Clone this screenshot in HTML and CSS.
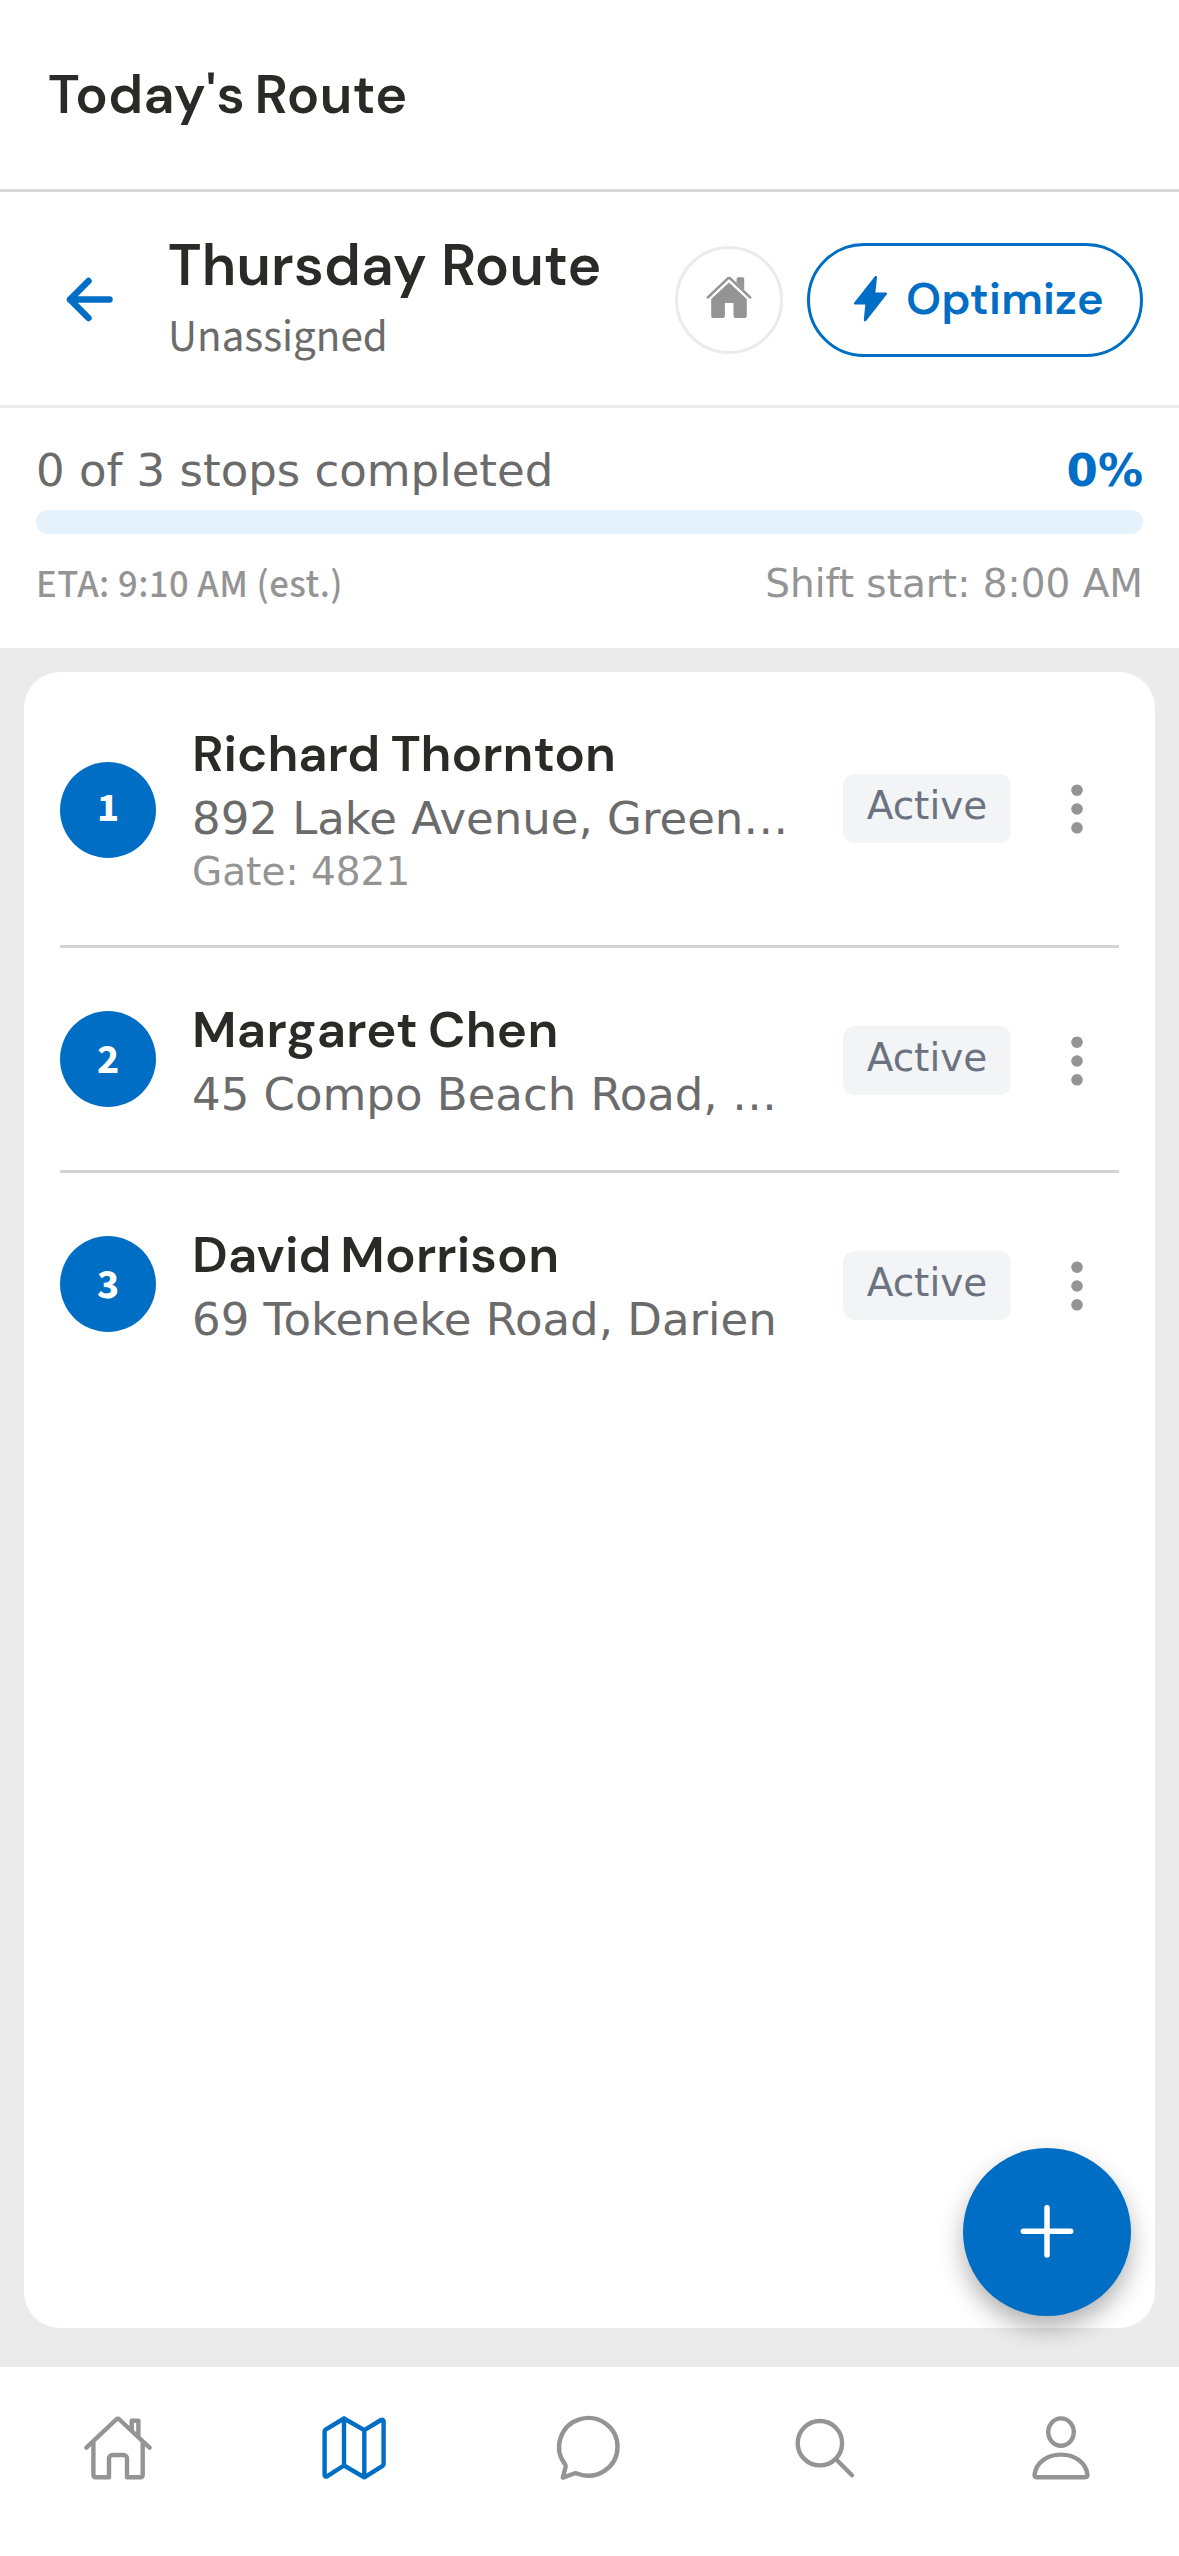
FILE: index.html
```html
<!DOCTYPE html>
<html lang="en">
<head>
<meta charset="utf-8">
<title>Today's Route</title>
<link rel="stylesheet" href="styles.css">
</head>
<body>
<div class="app">
  <header class="topbar"><h1 class="topbar-title">Today's Route</h1></header>

  <section class="route-header">
    <svg class="back" viewBox="0 0 72 72"><path d="M55.5 35.5H16M34.5 17 16 35.5l18.5 18.5"/></svg>
    <div class="route-heading">
      <h2 class="route-title">Thursday Route</h2>
      <p class="route-assignee">Unassigned</p>
    </div>
    <button class="home-button" aria-label="Start location">
      <svg class="home-solid" viewBox="0 0 48 48">
        <path d="M24 6.5 41.8 23v17a2 2 0 0 1-2 2H30.5a2 2 0 0 1-2-2V27h-8.6v13a2 2 0 0 1-2 2H8.2a2 2 0 0 1-2-2V23z"/>
        <path d="M31.6 6.8V2.8a1.5 1.5 0 0 1 1.5-1.5h4.6a1.5 1.5 0 0 1 1.5 1.5v11.4z"/>
        <path class="roof" d="M2.9 21.4 22.6 2.6q1.4-1.2 2.8 0l19.7 18.8"/>
      </svg>
    </button>
    <button class="optimize">
      <svg class="bolt" viewBox="0 0 33 46"><path d="M20.8.6c.9-1 2.3-.4 2.2.9L21.4 16.5h10.3c1.3 0 1.8 1.2 1 2.1L12.2 44.7c-.9 1.1-2.5.5-2.4-.9l1.5-15.3H1.2c-1.2 0-1.6-1.2-.9-2.1z"/></svg>
      <span>Optimize</span>
    </button>
  </section>

  <section class="progress">
    <div class="progress-row"><span>0 of 3 stops completed</span><strong class="percent">0%</strong></div>
    <div class="bar"></div>
    <div class="progress-meta"><span class="eta">ETA: 9:10 AM (est.)</span><span>Shift start: 8:00 AM</span></div>
  </section>

  <main class="main">
    <div class="card">
      <div class="stop stop-tall">
        <span class="number">1</span>
        <div class="info">
          <h3 class="name name-1">Richard Thornton</h3>
          <p class="address">892 Lake Avenue, Green…</p>
          <p class="note">Gate: 4821</p>
        </div>
        <span class="badge">Active</span>
        <svg class="kebab" viewBox="0 0 12 54"><circle cx="6" cy="8.2" r="5.8"/><circle cx="6" cy="27" r="5.8"/><circle cx="6" cy="45.8" r="5.8"/></svg>
      </div>
      <div class="stop">
        <span class="number">2</span>
        <div class="info">
          <h3 class="name name-2">Margaret Chen</h3>
          <p class="address">45 Compo Beach Road, …</p>
        </div>
        <span class="badge">Active</span>
        <svg class="kebab" viewBox="0 0 12 54"><circle cx="6" cy="8.2" r="5.8"/><circle cx="6" cy="27" r="5.8"/><circle cx="6" cy="45.8" r="5.8"/></svg>
      </div>
      <div class="stop">
        <span class="number">3</span>
        <div class="info">
          <h3 class="name name-3">David Morrison</h3>
          <p class="address">69 Tokeneke Road, Darien</p>
        </div>
        <span class="badge">Active</span>
        <svg class="kebab" viewBox="0 0 12 54"><circle cx="6" cy="8.2" r="5.8"/><circle cx="6" cy="27" r="5.8"/><circle cx="6" cy="45.8" r="5.8"/></svg>
      </div>
    </div>
    <button class="fab" aria-label="Add stop"><svg class="plus" viewBox="0 0 54 54"><path d="M27 2.7v47.4M3.3 26.2h47.4"/></svg></button>
  </main>

  <nav class="tabs">
    <svg class="tab" viewBox="0 0 72 72"><path d="M4.4 35.7 34.2 7.5q1.6-1.4 3.2 0l30.2 28.2M11.4 30v33.3a2 2 0 0 0 2 2H27V46.5a3.5 3.5 0 0 1 3.5-3.5h11a3.5 3.5 0 0 1 3.5 3.5v18.8h13.7a2 2 0 0 0 2-2V30M49.7 17.5V8.7h6.7V24"/></svg>
    <svg class="tab tab-active" viewBox="0 0 72 72"><path d="M26 6.5 7.6 17.7q-1 .6-1 1.8V62.7q0 2.8 2.8 1.5L26 53.5l20.3 11.8 18.3-11.5q1-.6 1-1.8V9.5q0-2.6-2.6-1.5L46.3 18.2 26 6.5v47M46.3 18.2v47"/></svg>
    <svg class="tab" viewBox="0 0 72 72"><path d="M12.1 52.3A29.2 28.8 0 1 1 24.8 61.7q-2.2-.9-4.2 0L9.8 65.6l2.8-10.6q.4-1.6-.5-2.7z"/></svg>
    <svg class="tab" viewBox="0 0 72 72"><circle cx="30.9" cy="31.2" r="22.2"/><path d="M47 47.3 63 63.3"/></svg>
    <svg class="tab" viewBox="0 0 72 72"><ellipse cx="36" cy="20.1" rx="12.8" ry="13.7"/><path d="M11.5 65.2h49a2 2 0 0 0 2-2.3C61 51 50.5 42.6 36 42.6S11 51 9.5 62.9a2 2 0 0 0 2 2.3z"/></svg>
  </nav>
</div>
</body>
</html>
```

FILE: styles.css
```css
* { box-sizing: border-box; }
body { margin: 0; background: #fff; }
h1, h2, h3, p { margin: 0; font-weight: 400; }
button { padding: 0; background: #fff; font: inherit; }

.app {
  width: 1179px;
  height: 2556px;
  display: flex;
  flex-direction: column;
  font-family: "DejaVu Sans", sans-serif;
  font-size: 45px;
  color: #6b6b6b;
  background: #fff;
}

.topbar {
  height: 192px;
  display: flex;
  align-items: center;
  padding: 0 48px;
  border-bottom: 3px solid #d6d6d6;
}
.topbar-title, .route-title, .name, .optimize {
  font-family: "DM Sans", "Inter", sans-serif;
  font-weight: 600;
  color: #2b2a29;
  white-space: nowrap;
}
.topbar-title { font-size: 54px; line-height: 67px; letter-spacing: .35px; word-spacing: -4px; }

.route-header {
  height: 216px;
  display: flex;
  align-items: center;
  padding: 3px 36px 0 54px;
  border-bottom: 3px solid #ebebeb;
}
.back { width: 72px; height: 72px; margin-right: 42px; fill: none; stroke: #006ec4; stroke-width: 6.5; stroke-linecap: round; stroke-linejoin: round; }
.route-heading { flex: 1; min-width: 0; }
.route-title { font-size: 57px; line-height: 65px; letter-spacing: .22px; }
.route-assignee { margin: 9px 0 1px; font-family: "Source Sans 3", "Noto Sans CJK JP", sans-serif; font-size: 45px; line-height: 60px; }
.home-button { width: 108px; height: 108px; display: grid; place-items: center; border: 3px solid #ebebeb; border-radius: 50%; margin-right: 24px; }
.home-solid { width: 48px; height: 48px; fill: #949494; }
.roof { fill: none; stroke: #949494; stroke-width: 2.6; stroke-linecap: round; }
.optimize {
  width: 336px;
  height: 114px;
  display: flex;
  align-items: center;
  gap: 19px;
  padding: 0 0 3px 44px;
  border: 3px solid #006ec4;
  border-radius: 57px;
  color: #006ec4;
  font-size: 45px;
  letter-spacing: .25px;
}
.bolt { width: 33px; height: 46px; fill: #006ec4; }

.progress { height: 240px; padding: 36px 36px 0; }
.progress-row, .progress-meta { display: flex; justify-content: space-between; }
.progress-row { line-height: 54px; margin-bottom: 12px; }
.percent { font-weight: 700; color: #006ec4; }
.bar { height: 24px; border-radius: 12px; background: #e5f2fb; }
.progress-meta { margin-top: 24px; font-size: 39px; line-height: 51px; color: #949494; }
.eta { font-family: "Source Sans 3", "Noto Sans CJK JP", sans-serif; font-weight: 500; font-size: 39px; line-height: 54px; letter-spacing: .44px; }

.main { position: relative; flex: 1; padding: 24px 24px 39px; background: #ebebeb; }
.card { height: 1656px; padding: 0 36px; border-radius: 36px; background: #fff; }
.stop { height: 225px; display: flex; align-items: center; padding-top: 3px; border-bottom: 3px solid #d4d4d4; }
.stop-tall { height: 276px; padding-top: 0; }
.stop:last-child { border-bottom-color: transparent; }
.number {
  width: 96px;
  height: 96px;
  margin-bottom: 3px;
  border-radius: 50%;
  background: #006ec4;
  color: #fff;
  font: 700 42px/99px "Source Sans 3", "Noto Sans CJK JP", sans-serif;
  text-align: center;
}
.stop-tall .number { margin: 3px 0 0; line-height: 93px; }
.info { width: 615px; margin: 0 36px; }
.name { margin-bottom: 4px; font-size: 51px; line-height: 64px; }
.name-1 { word-spacing: -2px; }
.name-2 { letter-spacing: .35px; word-spacing: -3px; }
.name-3 { letter-spacing: .15px; word-spacing: -4px; }
.address { line-height: 58px; white-space: nowrap; }
.note { font-size: 39px; line-height: 48px; color: #949494; }
.badge { width: 168px; height: 69px; border-radius: 12px; background: #f3f4f6; color: #6b7280; font-size: 39px; line-height: 63px; text-align: center; }
.kebab { width: 12px; height: 54px; margin-left: 60px; fill: #949494; }

.fab {
  position: absolute;
  right: 48px;
  bottom: 51px;
  width: 168px;
  height: 168px;
  display: grid;
  place-items: center;
  border: 0;
  border-radius: 50%;
  background: #006ec4;
  box-shadow: 0 12px 24px rgba(0, 0, 0, .3);
}
.plus { width: 54px; height: 54px; fill: none; stroke: #fff; stroke-width: 5.5; stroke-linecap: round; }

.tabs { height: 189px; display: grid; grid-template-columns: repeat(5, 1fr); justify-items: center; padding-top: 45px; background: #fff; }
.tab { width: 72px; height: 72px; fill: none; stroke: #949494; stroke-width: 4.4; stroke-linecap: round; stroke-linejoin: round; }
.tab-active { stroke: #006ec4; }
```
